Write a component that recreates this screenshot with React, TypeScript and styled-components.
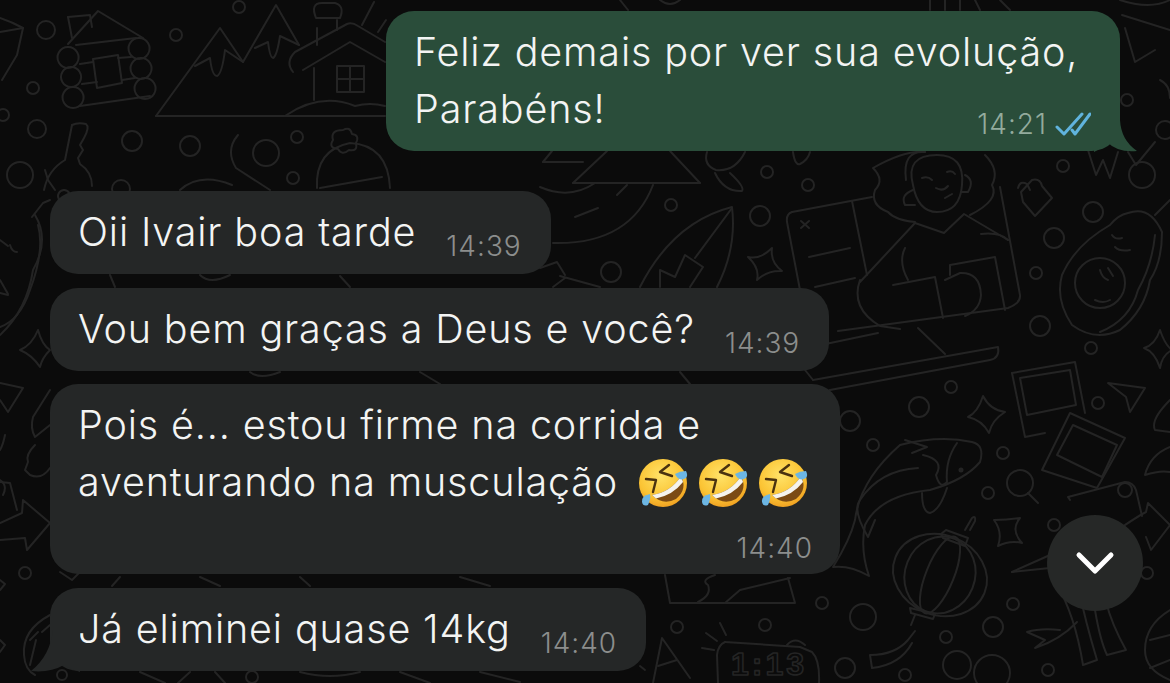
import React, { useId } from 'react';
import styled, { createGlobalStyle } from 'styled-components';

const GlobalStyle = createGlobalStyle`
  html, body {
    margin: 0;
    padding: 0;
    background: #0b0b0b;
  }
`;

const Screen = styled.div`
  position: relative;
  width: 1170px;
  height: 683px;
  overflow: hidden;
  background: #0b0b0b;
  font-family: 'Inter', 'Liberation Sans', sans-serif;
  box-sizing: border-box;
  padding: 11px 50px 0;
  display: flex;
  flex-direction: column;
`;

const WallpaperSvg = styled.svg`
  position: absolute;
  inset: 0;
  width: 1170px;
  height: 683px;
  fill: none;
  stroke: #242424;
  stroke-width: 2;
  stroke-linecap: round;
  stroke-linejoin: round;
`;

const Bubble = styled.div<{ $out?: boolean; $gap?: number }>`
  position: relative;
  box-sizing: border-box;
  align-self: ${({ $out }) => ($out ? 'flex-end' : 'flex-start')};
  margin-top: ${({ $gap }) => $gap ?? 0}px;
  background: ${({ $out }) => ($out ? '#2a4d3a' : '#252727')};
  border-radius: 28px;
  padding: 13px 29px 13px 28px;
  color: #f3f4f3;
  font-size: 39.5px;
  font-weight: 350;
  line-height: 57px;
  letter-spacing: 0.85px;
`;

const InlineRow = styled.div`
  display: flex;
  align-items: flex-end;
  gap: 30px;
`;

const StackedBody = styled.div<{ $minWidth?: number }>`
  display: flex;
  flex-direction: column;
  min-width: ${({ $minWidth }) => $minWidth ?? 0}px;
`;

const Time = styled.div<{ $out?: boolean }>`
  display: flex;
  align-items: center;
  gap: 8px;
  font-size: 28px;
  font-weight: 350;
  line-height: 30px;
  letter-spacing: 1px;
  white-space: nowrap;
  color: ${({ $out }) => ($out ? '#93ab9d' : '#8c8e8d')};
`;

const CornerTime = styled(Time)<{ $lift: number; $sink: number; $pull?: number }>`
  align-self: flex-end;
  margin-top: ${({ $lift }) => $lift}px;
  margin-bottom: ${({ $sink }) => -$sink}px;
  margin-right: ${({ $pull }) => -($pull ?? 0)}px;
`;

const Line = styled.div`
  white-space: nowrap;
`;

const EmojiSvg = styled.svg`
  display: inline-block;
  width: 50px;
  height: 50px;
  margin-left: 10px;
  vertical-align: -12px;

  &:first-of-type {
    margin-left: 20px;
  }
`;

const TailSvg = styled.svg<{ $side: 'left' | 'right' }>`
  position: absolute;
  bottom: -1px;
  ${({ $side }) => ($side === 'left' ? 'left: -22px;' : 'right: -18px;')}
`;

const ScrollButton = styled.button`
  position: absolute;
  left: 1047px;
  top: 515px;
  width: 96px;
  height: 96px;
  padding: 0;
  border: none;
  border-radius: 50%;
  background: #262827;
  display: flex;
  align-items: center;
  justify-content: center;
`;

const circles: [number, number, number][] = [
  [46, 30, 9], [176, 35, 6], [239, 7, 6], [33, 88, 6], [3, 115, 6], [37, 129, 9], [132, 141, 10],
  [190, 146, 10], [266, 153, 13], [297, 137, 6], [293, 178, 6], [20, 175, 13], [121, 189, 9],
  [671, 205, 6], [611, 272, 10], [767, 172, 6], [808, 185, 6], [760, 216, 10], [1063, 166, 6],
  [1142, 175, 13], [1093, 212, 10], [1054, 238, 10], [1036, 273, 6], [1040, 326, 10], [1091, 348, 6],
  [951, 387, 6], [919, 407, 10], [873, 445, 6], [1003, 453, 6], [988, 493, 6], [1098, 403, 6],
  [1054, 525, 6], [850, 421, 10], [863, 617, 13], [993, 627, 10], [1013, 604, 6], [946, 637, 6],
  [1147, 573, 6], [845, 668, 10], [905, 675, 6], [957, 665, 14], [992, 673, 18], [1048, 670, 6],
  [677, 627, 6], [765, 625, 6], [822, 603, 6], [25, 573, 6], [62, 675, 5], [252, 677, 6],
  [1165, 130, 9], [1127, 100, 6],
];

// lantern body, all around one tilted axis
const lanternRibs: [number, number][] = [[48, 40], [35, 39], [14, 41]];

const doodles: string[] = [
  // log cabin
  'M68 44 L98 11 L143 38', 'M68 17 L90 15 L92 27', 'M68 17 L72 38', 'M76 45 L136 38',
  'M80 64 L93 62', 'M118 58 L131 57', 'M82 84 L97 82', 'M122 80 L135 78', 'M80 106 L150 96',
  'M93 59 L118 55 L122 83 L97 88 Z',
  'M68 47 a10.5 10.5 0 1 0 0.1 0', 'M71 67 a10 10 0 1 0 0.1 0', 'M73 87 a10.5 10.5 0 1 0 0.1 0',
  'M139 38 a10.5 10.5 0 1 0 0.1 0', 'M141 58 a10.5 10.5 0 1 0 0.1 0', 'M145 78 a10.5 10.5 0 1 0 0.1 0',
  // mountains
  'M156 116 L220 28 L243 62 L276 5 L299 45', 'M156 116 L385 116',
  'M195 66 L210 58 Q212 76 217 76 Q222 74 225 50 L243 62',
  'M255 48 L268 42 Q270 58 273 58 Q277 56 280 36 L299 45',
  // house
  'M293 72 Q285 62 295 52 L347 24 Q352 22 358 26 L385 42', 'M303 70 L350 42 L385 62',
  'M317 28 L317 45', 'M337 20 L337 30', 'M316 18 Q310 3 322 3 L335 3 Q345 6 340 18 Z',
  'M337 66 H364 V92 H337 Z', 'M350 66 V92', 'M337 79 H364', 'M314 68 V100',
  'M285 116 Q320 92 355 106 Q370 102 385 106',
  'M362 25 L374 2', 'M378 32 L386 20',
  // flower pot, top left
  'M0 18 Q12 22 23 28 L17 55 L2 80', 'M0 32 L23 28',
  // key
  'M72 125 Q78 122 86 124 Q90 127 84 138 L80 145 L83 150 L78 158 L80 164 Q92 172 92 186',
  'M72 125 L65 160 Q48 170 44 190', 'M64 190 a6 6 0 1 0 0.1 0',
  // beanie
  'M317 188 Q315 150 350 143 Q388 145 390 188', 'M320 188 L382 177',
  'M343 130 Q350 126 352 134 Q360 135 356 143 Q358 152 349 150 Q342 156 338 149 Q328 148 333 140 Q330 130 343 130',
  // snowboard
  'M238 135 Q225 150 236 168 L270 190', 'M180 190 Q200 172 232 185',
  // top strip above the bubble
  'M620 0 L628 10', 'M660 0 Q670 8 680 0', 'M930 0 V10', 'M945 0 V10', 'M960 0 V10', 'M975 0 L980 10',
  'M1000 0 L1010 10', 'M1120 0 Q1150 10 1170 0', 'M1122 15 L1170 30', 'M1125 28 L1135 62 L1155 50',
  'M1128 152 L1136 165 L1155 142', 'M1160 80 Q1170 85 1170 98',
  // triangle dome under the outgoing bubble
  'M573 183 L607 151', 'M573 183 L700 183', 'M700 183 L670 151', 'M543 162 L583 162', 'M543 162 L552 151',
  'M540 187 Q570 200 595 183', 'M617 195 L627 185', 'M575 217 L598 208',
  'M653 185 Q630 245 553 243',
  // surfboard
  'M640 287 Q673 222 732 207 Q737 248 717 287', 'M732 208 L695 258',
  'M660 287 L660 270 L675 277 L685 255 L703 267 L690 287',
  // little star
  'M748 257 Q760 260 772 248 Q770 262 782 271 Q768 270 757 280 Q760 268 748 257 Z',
  // rocket bits
  'M707 152 Q703 165 716 170 Q735 172 745 152', 'M715 173 Q724 192 742 191 Q745 187 730 173',
  'M793 152 Q795 166 800 164 Q808 160 810 152',
  'M540 268 L557 262 L565 275 M553 287 L565 278',
  // laptop person
  'M792 212 Q786 214 787 222 L800 290', 'M792 212 L872 197', 'M852 201 L867 275',
  'M801 221 L809 228', 'M809 221 L801 228', 'M809 257 L850 248', 'M815 287 L855 278',
  'M1000 187 L1020 295 Q1021 303 1008 308 L838 331', 'M860 280 Q850 308 880 326 L900 329',
  'M915 223 L860 282', 'M915 223 L944 233 L964 214 L1008 240', 'M1008 240 Q1000 232 981 234',
  'M905 248 Q898 262 908 280', 'M893 285 L935 277 L943 318', 'M950 275 L950 265 L995 257 L1005 310',
  'M945 280 L960 273 Q980 272 981 295 Q980 310 965 316',
  'M816 346 L878 333', 'M918 328 L945 354', 'M813 380 L998 347 Q1000 358 990 360 L830 390', 'M805 370 L813 380 M830 390 L822 395',
  // head and hair
  'M913 185 Q905 155 937 155 Q965 155 962 185 Q960 212 937 212 Q918 212 913 185',
  'M906 180 Q902 150 925 152', 'M965 175 Q975 180 968 192 L961 192', 'M913 190 Q900 195 905 205 L915 205',
  'M925 152 Q905 150 873 168 Q885 180 875 190 Q870 205 888 212 Q895 220 915 222',
  'M985 155 Q1000 170 992 185 Q1000 200 970 215',
  'M922 178 Q928 176 932 180', 'M947 172 Q952 170 955 174', 'M936 188 Q943 192 948 186', 'M945 198 L952 194',
  // lock
  'M1021 192 L1032 180 Q1040 178 1042 186 L1052 198 L1035 216 L1023 202 Z', 'M1018 188 Q1020 180 1027 184 L1030 190',
  // lightning
  'M1088 150 L1096 175 L1103 160 L1110 178 L1118 152',
  // avocado
  'M1128 213 Q1150 205 1162 232 Q1162 262 1150 280 Q1145 310 1120 330 Q1095 342 1072 325 Q1055 300 1062 275 Q1075 245 1110 225 Q1118 215 1128 213',
  'M1155 235 Q1152 265 1138 290 Q1130 320 1100 332', 'M1155 215 L1170 200',
  'M1075 283 a25 25 0 1 0 50 0 a25 25 0 1 0 -50 0',
  'M1112 235 Q1115 240 1122 238', 'M1115 247 Q1120 252 1130 250', 'M1095 300 Q1103 304 1110 300',
  'M1100 270 Q1102 278 1108 280', 'M1108 268 L1113 276',
  // sparkle right
  'M1144 348 Q1155 345 1160 330 Q1165 345 1172 350 Q1162 355 1160 368 Q1155 352 1144 348 Z',
  // polaroids
  'M1012 373 L1075 362 L1085 413', 'M1012 373 L1025 437 L1045 433', 'M1020 378 L1070 370 L1076 405 L1027 415 Z',
  'M1070 413 L1125 438 L1097 488 L1042 470 Z', 'M1073 425 L1117 445 L1102 477 L1057 455 Z',
  // paper plane
  'M1108 383 L1145 388 L1130 412 L1126 397 Z',
  // stars
  'M968 417 Q978 412 983 396 Q990 410 1005 412 Q992 420 989 433 Q982 420 968 417 Z',
  'M994 520 Q1008 520 1020 518 Q1010 530 1022 543 Q1010 540 998 546 Q1003 532 994 520 Z',
  // magnifier
  'M1007 483 a13 13 0 1 0 26 0 a13 13 0 1 0 -26 0', 'M1028 493 L1038 503',
  // koi
  'M833 567 Q850 540 855 520 Q860 480 900 445 Q940 435 972 442 Q985 445 980 462 Q965 480 930 490 Q880 495 865 525 Q860 550 869 576 Q850 565 833 567 Z',
  'M905 440 L927 447 L912 453', 'M922 493 Q922 512 930 513 Q940 510 947 488',
  'M923 455 Q945 460 936 475 Q940 490 947 482 Q945 460 957 443', 'M918 468 Q880 470 860 500 Q852 510 868 537 L875 520',
  // lantern caps and tassel
  'M941 534 L946 530 L968 538 L965 546 L943 538 Z',
  'M965 530 L972 518 Q976 515 975 521 L970 530', 'M910 608 L935 614 L933 619 L911 613 Z', 'M915 615 L911 625', 'M915 631 L908 640 Q895 655 870 655 L872 668 Q900 665 912 643',
  // bamboo, camera and arrow by the scroll button
  'M1070 500 L1068 497 L1125 482 Q1133 482 1136 490 L1142 516', 'M1118 490 a7 7 0 1 0 14 0 a7 7 0 1 0 -14 0',
  'M1122 527 Q1140 515 1146 512 L1148 503 L1170 525 L1151 550 L1146 537', 'M1012 572 L1050 555', 'M1012 572 L1050 568',
  'M1056 583 Q1075 615 1083 665 L1097 660 Q1085 620 1079 590', 'M1095 610 Q1100 640 1107 655 L1126 650 Q1112 625 1106 602', 'M1060 630 Q1040 628 1027 632 L1045 640 L1035 648 Q1060 640 1077 622',
  // right edge ball
  'M1170 610 Q1145 625 1145 650 Q1145 670 1170 680', 'M1150 640 L1170 635', 'M1150 668 L1170 660', 'M1170 400 Q1150 420 1155 430 L1170 432',
  'M1170 447 Q1150 455 1145 475 Q1160 470 1170 472',
  // a, clock and bits below the big bubble
  'M665 575 L670 603 L795 603 L788 578', 'M698 602 Q712 595 708 585 Q700 580 715 575', 'M725 603 L740 590 L790 578',
  'M653 683 L662 638 L690 678', 'M658 666 L677 660', 'M640 666 L645 670',
  'M720 623 L726 635', 'M706 633 L717 641', 'M702 648 L714 650',
  'M725 642 Q718 645 717 655 L718 683', 'M725 642 L800 647 L812 652 Q820 660 819 683', 'M787 645 Q795 636 805 645',
  // left column
  'M35 215 Q50 240 33 270 Q27 310 0 335', 'M38 225 Q45 250 30 290 Q20 320 0 327', 'M32 217 L43 203 L50 200 M45 170 L48 180 L55 190',
  'M0 240 L8 246', 'M10 245 Q12 252 17 252', 'M0 280 L8 294', 'M0 293 L8 295',
  'M20 350 Q32 345 38 330 Q42 345 50 350 Q42 358 40 367 Q32 355 20 350 Z',
  'M0 383 L23 388 L8 412 L0 400', 'M50 390 L33 417 Q30 428 35 437 L50 425', 'M35 445 Q25 455 28 462 L25 470 L30 475 Q42 480 50 468',
  'M0 482 L10 483 L17 510', 'M0 540 L25 538 L27 550 L50 523 L23 500 L22 513 L0 523',
  'M5 435 Q3 445 0 450', 'M0 480 Q8 485 3 495',
  // ball at the last tail
  'M50 615 Q22 630 24 655 Q25 670 35 675', 'M42 632 L50 625', 'M30 640 L38 632', 'M36 640 L30 665',
  'M0 580 L5 584 L0 590', 'M60 572 L72 580 L80 572', 'M0 640 L5 645 L0 652',
  // little cuts at the page bottom
  'M140 672 L165 683', 'M190 672 L178 683', 'M215 672 L225 683', 'M300 672 Q330 680 360 672', 'M400 672 L430 683', 'M480 672 L520 682',
  // gaps between the incoming bubbles
  'M110 275 L115 287', 'M200 275 Q210 285 230 275', 'M340 276 L350 287', 'M560 276 L600 287', 'M680 372 L690 384', 'M420 372 L440 384', 'M250 372 Q260 380 280 372',
  'M120 577 L112 586', 'M200 577 L220 586', 'M300 577 L310 586', 'M460 577 L490 586',
];

const Wallpaper = () => (
  <WallpaperSvg viewBox="0 0 1170 683" aria-hidden="true">
    {doodles.map((d, i) => (
      <path key={i} d={d} />
    ))}
    {circles.map(([cx, cy, r], i) => (
      <circle key={i} cx={cx} cy={cy} r={r} />
    ))}
    {lanternRibs.map(([rx, ry], i) => (
      <ellipse key={i} cx={940} cy={575} rx={rx} ry={ry} transform="rotate(22 940 575)" />
    ))}
    <text x={731} y={675} fontFamily="Liberation Sans" fontWeight="700" fontSize="32" letterSpacing="3" fill="none" strokeWidth="1.6">
      1:13
    </text>
    <circle cx={961} cy={470} r={1.5} fill="#242424" />
  </WallpaperSvg>
);

const RoflEmoji = () => {
  const id = useId().replace(/[^a-zA-Z0-9]/g, '');
  return (
    <EmojiSvg viewBox="0 0 50 50" aria-hidden="true">
      <defs>
        <radialGradient id={`${id}f`} cx="45%" cy="35%" r="70%">
          <stop offset="0%" stopColor="#ffe268" />
          <stop offset="65%" stopColor="#fbc434" />
          <stop offset="100%" stopColor="#ee9a1e" />
        </radialGradient>
      </defs>
      <circle cx="25" cy="25" r="24" fill={`url(#${id}f)`} />
      <path d="M14 37 Q33 34 43 18 Q50 31 38 41 Q25 48 14 37Z" fill="#7b4a14" />
      <path d="M14 37 Q33 34 43 18 L45 24 Q35 37 18 40.500Z" fill="#f5f3ee" />
      <path d="M31 7 L22 14 L34 18" fill="none" stroke="#4a3210" strokeWidth="2.4" strokeLinecap="round" strokeLinejoin="round" />
      <path d="M8 21 L18 22 L15 34" fill="none" stroke="#4a3210" strokeWidth="2.4" strokeLinecap="round" strokeLinejoin="round" />
      <path d="M37 16 Q42 13 48 13 Q51 19 46 21 Q40 23 37 16Z" fill="#6cb6e4" />
      <path d="M12 36 Q13 41 10 47 Q5 49 4 44 Q3 38 12 36Z" fill="#6cb6e4" />
    </EmojiSvg>
  );
};

const DoubleCheck = () => (
  <svg width="36" height="24" viewBox="0 0 36 24" fill="none" stroke="#60b3dd" strokeWidth="3" strokeLinecap="round" strokeLinejoin="round" aria-hidden="true">
    <path d="M2 15 L9 22 L27 2" />
    <path d="M17 18 L20 22 L35 2" />
  </svg>
);

const App: React.FC = () => (
  <>
    <GlobalStyle />
    <Screen>
      <Wallpaper />
      <Bubble $out style={{ width: 734 }}>
        <StackedBody>
          <Line>Feliz demais por ver sua evolução,</Line>
          <Line>Parabéns!</Line>
          <CornerTime $out $lift={-29} $sink={1}>
            14:21
            <DoubleCheck />
          </CornerTime>
        </StackedBody>
        <TailSvg $side="right" width="44" height="32" viewBox="0 0 44 32" aria-hidden="true">
          <path d="M26 0 Q27 20 43 31 Q24 33 13 22 Q8 28 0 32 L0 0Z" fill="#2a4d3a" />
        </TailSvg>
      </Bubble>

      <Bubble $gap={40}>
        <InlineRow>
          <Line>Oii Ivair boa tarde</Line>
          <Time>14:39</Time>
        </InlineRow>
      </Bubble>
      <Bubble $gap={14}>
        <InlineRow>
          <Line>Vou bem graças a Deus e você?</Line>
          <Time>14:39</Time>
        </InlineRow>
      </Bubble>
      <Bubble $gap={13}>
        <StackedBody $minWidth={733}>
          <Line>Pois é... estou firme na corrida e</Line>
          <Line>
            aventurando na musculação
            <RoflEmoji />
            <RoflEmoji />
            <RoflEmoji />
          </Line>
          <CornerTime $lift={22} $sink={2} $pull={2}>
            14:40
          </CornerTime>
        </StackedBody>
      </Bubble>
      <Bubble $gap={14}>
        <InlineRow>
          <Line>Já eliminei quase 14kg</Line>
          <Time>14:40</Time>
        </InlineRow>
        <TailSvg $side="left" width="52" height="42" viewBox="0 0 52 42" aria-hidden="true">
          <path d="M25 0 Q22 26 3 41 Q22 43 36 35 Q44 40 52 42 L52 0Z" fill="#252727" />
        </TailSvg>
      </Bubble>

      <ScrollButton aria-label="Ir para o fim">
        <svg width="40" height="24" viewBox="0 0 40 24" fill="none" stroke="#ffffff" strokeWidth="5" strokeLinecap="round" strokeLinejoin="round">
          <path d="M4 4 L20 20 L36 4" />
        </svg>
      </ScrollButton>
    </Screen>
  </>
);

export default App;
